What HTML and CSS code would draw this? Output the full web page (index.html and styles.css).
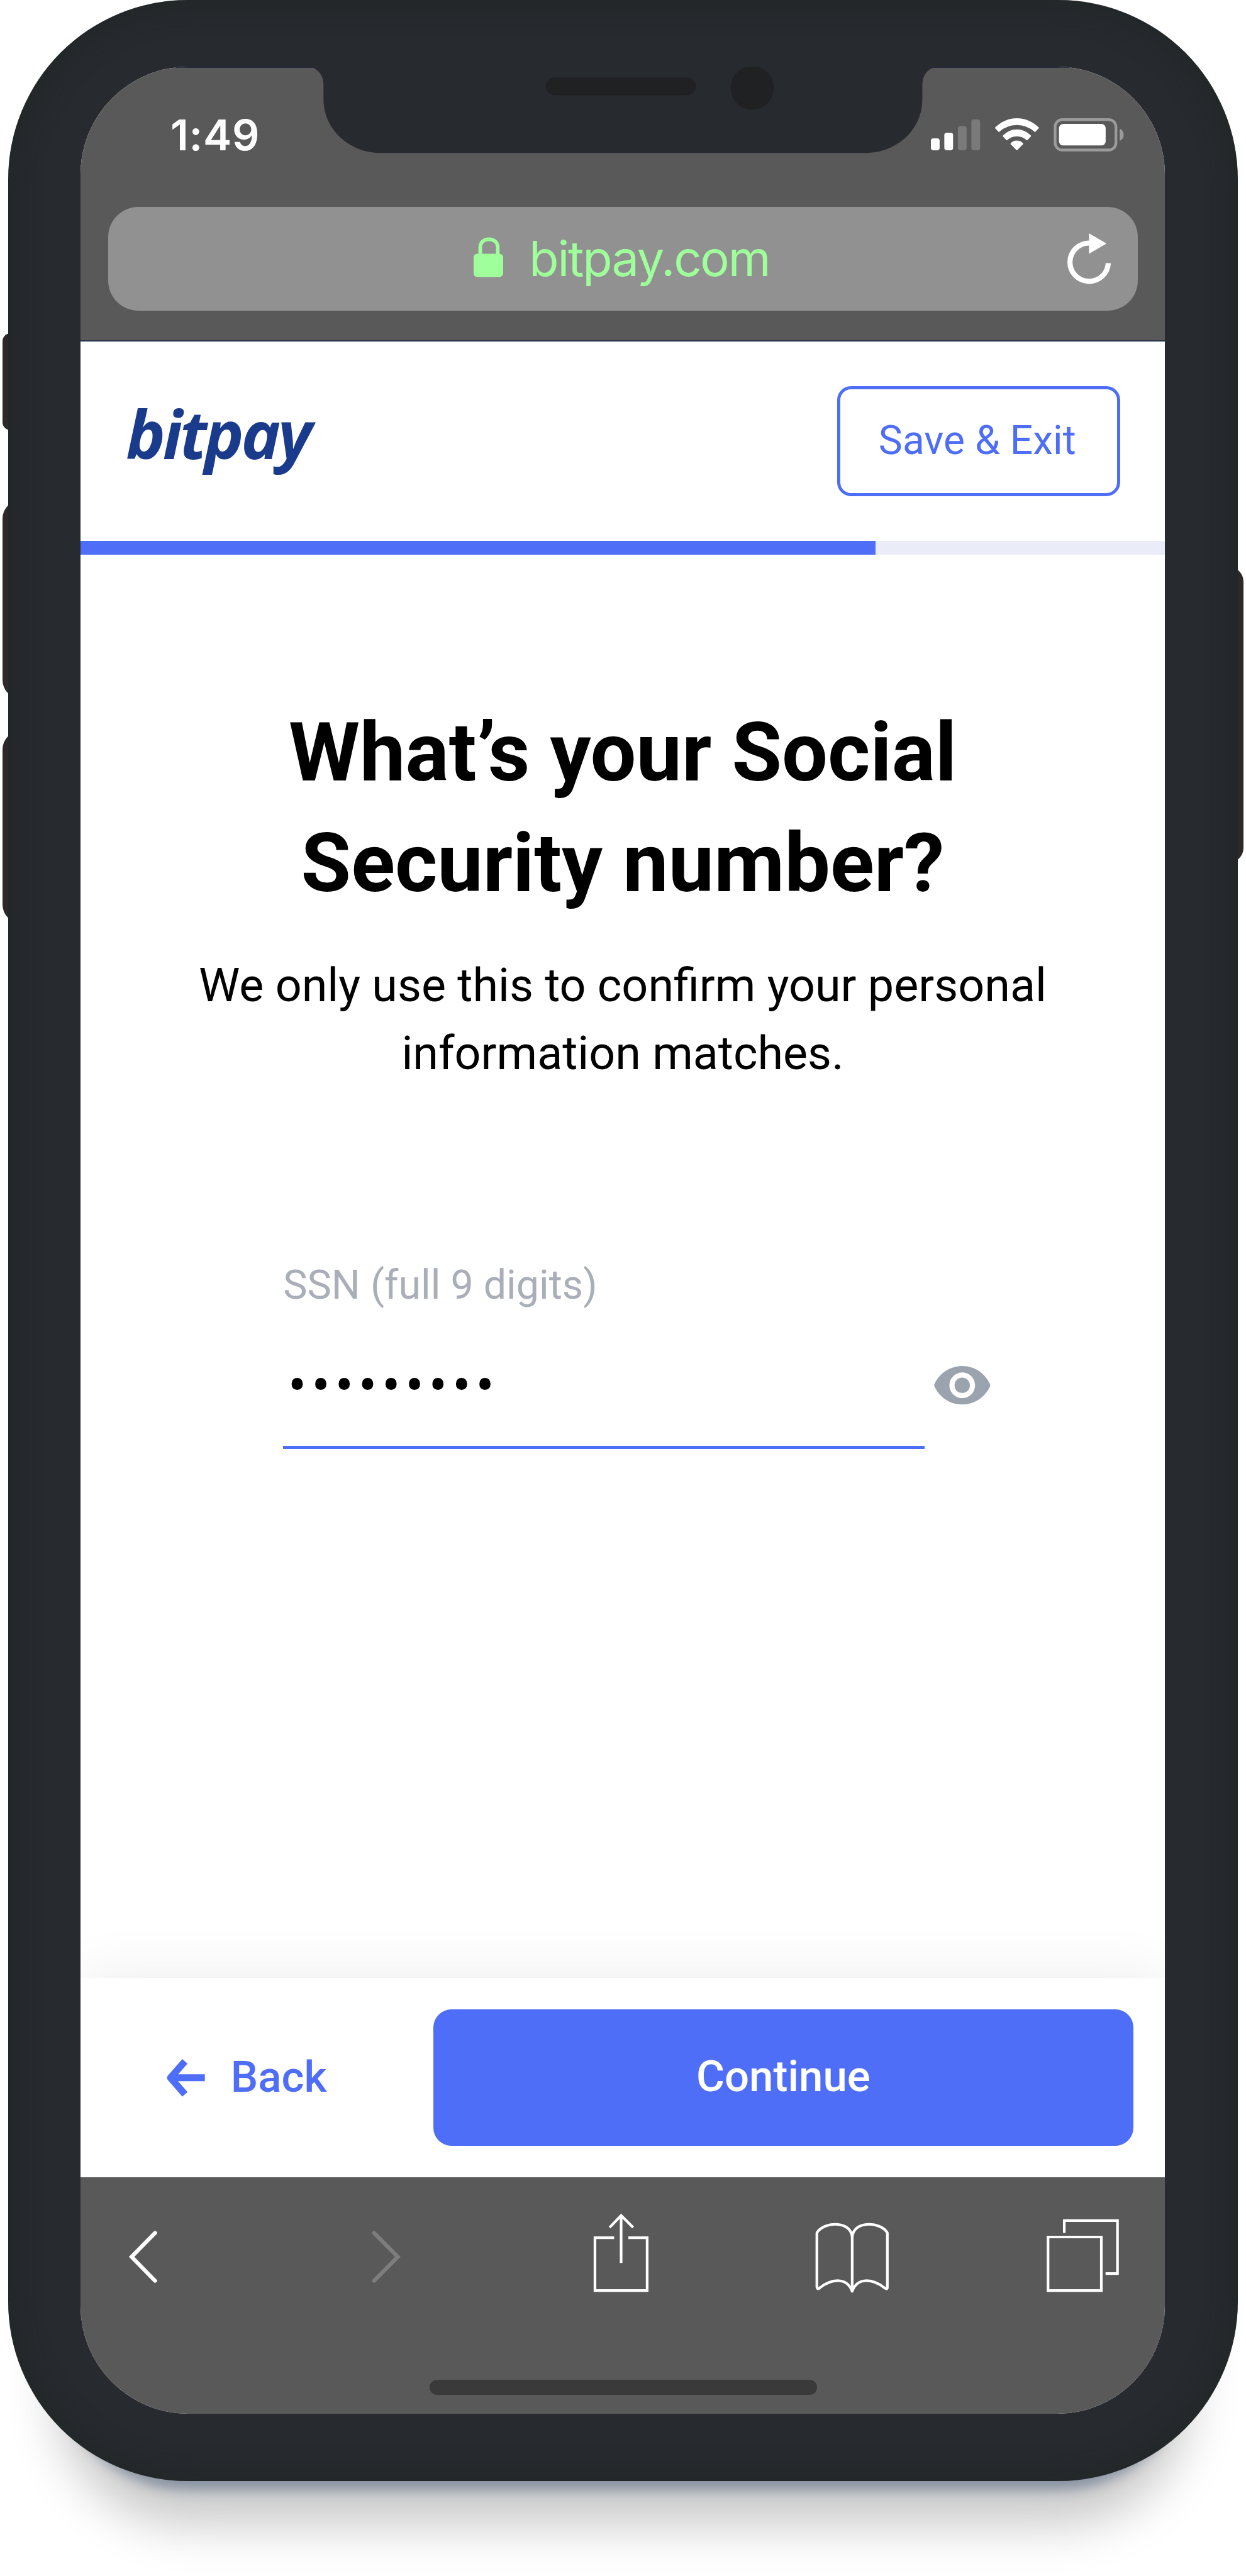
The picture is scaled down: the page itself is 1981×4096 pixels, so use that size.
FILE: index.html
```html
<!DOCTYPE html>
<html lang="en">
<head>
<meta charset="utf-8">
<title>BitPay – Social Security number</title>
<link rel="stylesheet" href="styles.css">
</head>
<body>
<div class="stage">
  <span class="side-button mute"></span>
  <span class="side-button volume-up"></span>
  <span class="side-button volume-down"></span>
  <span class="side-button power"></span>

  <div class="phone">
    <div class="screen">
      <svg class="notch" viewBox="520 110 1028 146" aria-hidden="true">
        <path fill="#272a2e" d="M520 110V113C530 118 537 127 537 141V165C537 215 580 254.300 632 254.300H1435C1490 254.300 1531 215 1531 165V141C1531 127 1538 118 1548 113V110Z"/>
        <rect x="906" y="129" width="249" height="29.500" rx="14.750" fill="#1f2122"/>
        <circle cx="1248.700" cy="146.300" r="36" fill="#1f2122"/>
      </svg>

      <div class="chrome">
        <div class="status">
          <span class="clock">1:49</span>
          <svg class="status-icons" viewBox="1545 195 320 57" aria-hidden="true">
            <g fill="#fff">
              <rect x="1545" y="229.500" width="14.500" height="19.700" rx="4"/>
              <rect x="1567.300" y="220" width="14.500" height="29.200" rx="4"/>
              <rect x="1589.800" y="209" width="14.500" height="40.200" rx="4" opacity=".2"/>
              <rect x="1612.200" y="197.800" width="14.500" height="51.400" rx="4" opacity=".2"/>
              <path d="M1651.800 211.300Q1667.500 196 1687.700 196T1724 211.300Q1724.600 212 1724 212.700L1718.500 218.600Q1717.800 219.200 1717.100 218.600Q1704.500 207.300 1687.700 207.300T1658.500 218.600Q1657.800 219.200 1657.100 218.600L1651.800 212.700Q1651.200 212 1651.800 211.300Z"/>
              <path d="M1664.600 224.800Q1674.500 214.600 1687.700 214.600T1711 224.800Q1711.600 225.500 1711 226.200L1705.300 232.400Q1704.600 233 1703.900 232.400Q1697 226 1687.700 226T1671.700 232.400Q1671 233 1670.300 232.400L1664.600 226.200Q1664 225.500 1664.600 224.800Z"/>
              <path d="M1677.500 237.500Q1681.500 233 1687.700 233T1698 237.500Q1698.500 238.200 1698 239L1688.500 248.800Q1687.700 249.600 1686.900 248.800L1677.400 239Q1676.900 238.200 1677.500 237.500Z"/>
              <rect x="1757.600" y="205.500" width="77.500" height="35.800" rx="7"/>
            </g>
            <rect x="1751.200" y="198.200" width="101" height="50.600" rx="12" fill="none" stroke="#9b9b9b" stroke-width="4.500"/>
            <path fill="#9b9b9b" d="M1858.500 213.500C1867 216.500 1867 230.500 1858.500 233.500Z"/>
          </svg>
        </div>
        <div class="address">
          <svg class="lock" viewBox="786 394 49 67" aria-hidden="true">
            <path fill="none" stroke="#9fff9a" stroke-width="6" d="M797 424V411C797 393 826 393 826 411V424"/>
            <rect x="786" y="421.700" width="49" height="38.500" rx="6" fill="#9fff9a"/>
          </svg>
          <span class="domain">bitpay.com</span>
          <svg class="reload" viewBox="1770 387 74 86" aria-hidden="true">
            <path fill="none" stroke="#fff" stroke-width="8.500" d="M1838.900 437.500A31.800 31.800 0 1 1 1807.500 404.200"/>
            <path fill="#fff" d="M1807 388L1836 405L1807 422Z"/>
          </svg>
        </div>
      </div>

      <header class="site-header">
        <span class="logo">bitpay</span>
        <button class="save">Save &amp; Exit</button>
      </header>
      <div class="progress"><div class="progress-fill"></div></div>

      <main class="content">
        <h1>What’s your Social<br>Security number?</h1>
        <p class="lead">We only use this to confirm your personal<br>information matches.</p>
        <div class="field">
          <div class="label">SSN (full 9 digits)</div>
          <div class="input-row">
            <div class="value">•••••••••</div>
            <svg class="eye" viewBox="1 4.500 22 15" aria-hidden="true">
              <path fill="#9ba3af" d="M12 4.500C7 4.500 2.730 7.610 1 12c1.730 4.390 6 7.500 11 7.500s9.270-3.110 11-7.500c-1.730-4.390-6-7.500-11-7.500zM12 17c-2.760 0-5-2.240-5-5s2.240-5 5-5 5 2.240 5 5-2.240 5-5 5zm0-8c-1.660 0-3 1.340-3 3s1.340 3 3 3 3-1.340 3-3-1.340-3-3-3z"/>
            </svg>
          </div>
        </div>
      </main>

      <footer class="actions">
        <span class="back">
          <svg class="arrow" viewBox="277 3418 64 64" aria-hidden="true">
            <path fill="none" stroke="#4f6ef7" stroke-width="11.500" stroke-linejoin="round" d="M340.400 3450.200H288M307.300 3422.800L283.400 3450.200L307.300 3477.600"/>
          </svg>
          Back
        </span>
        <button class="continue">Continue</button>
      </footer>

      <nav class="toolbar">
        <svg class="tool" viewBox="211 3670 54 140"><path d="M257.500 3706L218.500 3745.700L257.500 3785.500" stroke-width="6.500" stroke-linecap="round"/></svg>
        <svg class="tool dim" viewBox="614 3670 54 140"><path d="M621 3706L660.500 3745.700L621 3785.500" stroke-width="6.500" stroke-linecap="round"/></svg>
        <svg class="tool share" viewBox="981 3670 99 140"><path d="M1019 3714H987.200V3801.600H1073.800V3714H1042.600M1030.600 3678V3756M1011.500 3697L1030.600 3677L1050.500 3697"/></svg>
        <svg class="tool book" viewBox="1350 3670 129 140"><path stroke-linejoin="round" d="M1414.600 3804V3715C1414.600 3684 1366 3687 1356 3706V3796C1357 3800 1359 3799 1361 3797C1382 3781 1406 3780 1414.600 3803C1423 3780 1447 3781 1468 3797C1471 3799 1473 3800 1473 3796V3706C1463 3687 1414.600 3684 1414.600 3715"/></svg>
        <svg class="tool tabs" viewBox="1733 3670 128 140"><path d="M1739.500 3712.800H1828V3801.600H1739.500ZM1766.500 3706V3685.500H1854.800V3773.500H1835"/></svg>
        <span class="home-indicator"></span>
      </nav>
    </div>
  </div>
</div>
</body>
</html>
```
FILE: styles.css
```css
/* 1rem is ten design pixels; the design is 2068 wide */
html {
  font-size: 9.5791px;
}

* {
  box-sizing: border-box;
}

body {
  margin: 0;
  background: #fff;
  font-family: Roboto, "Liberation Sans", sans-serif;
}

svg {
  display: block;
  flex: none;
}

button {
  font: inherit;
  margin: 0;
  padding: 0;
}

.stage {
  position: relative;
  width: 206.8rem;
  height: 427.6rem;
  padding: 0 1.4rem;
  overflow: hidden;
}

.side-button {
  position: absolute;
  width: 8rem;
  background: #2c2828;
}

.mute {
  left: 0.4rem;
  top: 55.3rem;
  height: 16.1rem;
  border-radius: 1.3rem;
}

.volume-up {
  left: 0.4rem;
  top: 83rem;
  height: 33rem;
  border-radius: 3.1rem;
}

.volume-down {
  left: 0.4rem;
  top: 121.3rem;
  height: 31.9rem;
  border-radius: 3.1rem;
}

.power {
  right: 0.4rem;
  top: 94.1rem;
  height: 49.1rem;
  border-radius: 2.5rem;
}

.phone {
  position: relative;
  height: 411.8rem;
  padding: 11.1rem 12.1rem 11.1rem 12rem;
  border-radius: 29.8rem;
  background: #272a2e;
  box-shadow:
    inset 0 0 5rem rgba(28, 36, 34, 0.75),
    0 9.4rem 2rem -8rem rgba(40, 66, 106, 0.4),
    0 15rem 8rem -8rem rgba(0, 0, 0, 0.22);
}

.screen {
  position: relative;
  display: flex;
  flex-direction: column;
  height: 389.6rem;
  border-radius: 17.9rem;
  overflow: hidden;
  background: #fff;
}

.notch {
  position: absolute;
  left: 38.6rem;
  top: -0.1rem;
  width: 102.8rem;
  height: 14.6rem;
}

/* browser chrome */
.chrome {
  height: 45.6rem;
  padding: 0 4.5rem 0 4.6rem;
  background: linear-gradient(#252b3a 0.2rem, #595959 0.2rem);
  border-bottom: 0.25rem solid #263148;
}

.status {
  display: flex;
  align-items: center;
  justify-content: space-between;
  height: 22.5rem;
  padding: 0 2.3rem 0 10.3rem;
}

.clock {
  font: 600 7.1rem/1 Inter, sans-serif;
  letter-spacing: 0.08rem;
  color: #fff;
}

.status-icons {
  width: 32rem;
  height: 5.7rem;
}

.address {
  display: flex;
  align-items: center;
  height: 17.3rem;
  margin-top: 0.7rem;
  padding: 0 4.4rem 0 60.6rem;
  border-radius: 5rem;
  background: #919191;
}

.lock {
  width: 4.9rem;
  height: 6.7rem;
  margin-top: -0.4rem;
}

.domain {
  margin-left: 4.3rem;
  font: 400 8.1rem/1 Inter, sans-serif;
  letter-spacing: -0.22rem;
  color: #9fff9a;
}

.reload {
  width: 7.4rem;
  height: 8.6rem;
  margin-left: auto;
}

/* page */
.site-header {
  display: flex;
  align-items: center;
  justify-content: space-between;
  height: 33.1rem;
  padding: 0 7.4rem 0 7.5rem;
}

.logo {
  padding-bottom: 2.6rem;
  font: italic 700 11rem/1 "Open Sans", sans-serif;
  letter-spacing: -0.43rem;
  color: #1a3b8b;
}

.save {
  width: 47rem;
  height: 18.3rem;
  padding: 0 0.4rem 0.3rem 0;
  border: 0.53rem solid #4f6ef7;
  border-radius: 2.3rem;
  background: none;
  font-size: 6.7rem;
  color: #4f6ef7;
}

.progress {
  height: 2.3rem;
  background: #eaecf8;
}

.progress-fill {
  width: 73.35%;
  height: 100%;
  background: #4f6ef7;
}

.content {
  flex: 1;
  padding-top: 23.8rem;
  text-align: center;
  color: #000;
}

h1 {
  margin: 0;
  font-size: 13.5rem;
  font-weight: 700;
  line-height: 18.35rem;
}

.lead {
  margin: 5.5rem 0 0;
  font-size: 7.69rem;
  line-height: 11.2rem;
}

.field {
  margin: 28.8rem 0 0 33.6rem;
  text-align: left;
}

.label {
  font-size: 6.74rem;
  line-height: 8rem;
  color: #a9aeb8;
}

.input-row {
  display: flex;
  align-items: center;
  gap: 1.5rem;
  height: 21rem;
  margin-top: 2.2rem;
}

.value {
  width: 106.5rem;
  height: 21rem;
  padding-left: 0.8rem;
  border-bottom: 0.55rem solid #4f6ef7;
  font-size: 9.2rem;
  line-height: 20.9rem;
  letter-spacing: 0.79rem;
}

.eye {
  width: 9.36rem;
  height: 6.4rem;
}

.actions {
  display: flex;
  align-items: center;
  justify-content: space-between;
  height: 33.1rem;
  padding: 0 5.2rem 0 14.3rem;
  background: #fff;
  box-shadow: 0 0 9rem rgba(0, 0, 0, 0.08);
  font-size: 7.2rem;
  font-weight: 500;
}

.back {
  display: flex;
  align-items: center;
  gap: 4.2rem;
  line-height: 8.4rem;
  color: #4f6ef7;
}

.arrow {
  width: 6.4rem;
  height: 6.4rem;
}

.continue {
  width: 116.2rem;
  height: 22.6rem;
  padding-bottom: 0.3rem;
  border: 0;
  border-radius: 3rem;
  background: #4f6ef7;
  color: #fff;
}

/* browser toolbar */
.toolbar {
  position: relative;
  display: grid;
  grid-template-columns: 40.3rem 36.7rem 36.9rem 38.3rem 12.8rem;
  align-content: start;
  height: 39.3rem;
  padding: 5.6rem 0 0 7.7rem;
  background: #595959;
}

.tool {
  width: 5.4rem;
  height: 14rem;
  fill: none;
  stroke: #fff;
  stroke-width: 4.4;
}

.dim {
  stroke: #7d7d7d;
}

.share {
  width: 9.9rem;
}

.book {
  width: 12.9rem;
}

.tabs {
  width: 12.8rem;
}

.home-indicator {
  grid-column: 1 / -1;
  width: 64.3rem;
  height: 2.5rem;
  margin: 14rem 0 0 50.2rem;
  border-radius: 1.25rem;
  background: #3a3a3a;
}
```
